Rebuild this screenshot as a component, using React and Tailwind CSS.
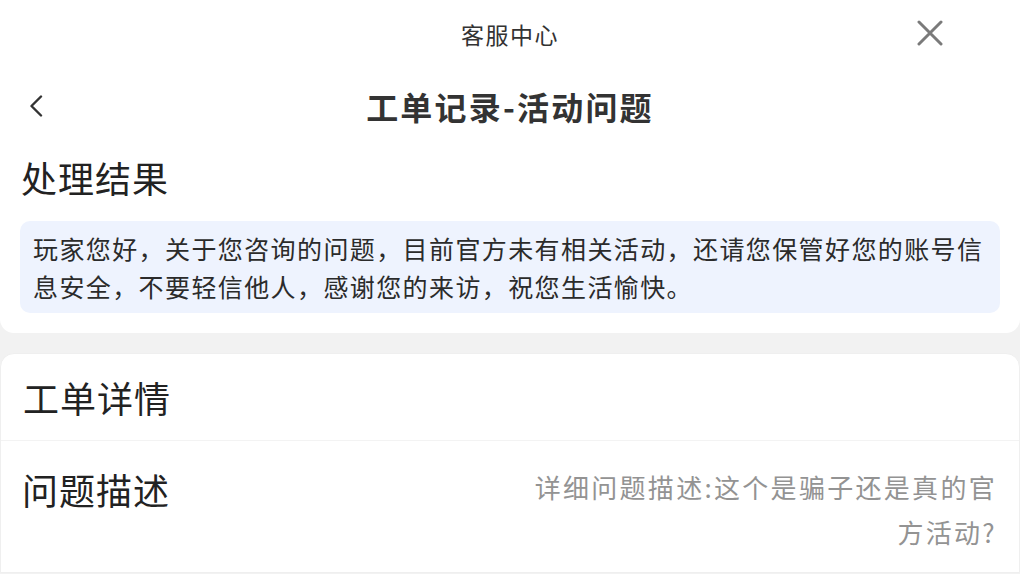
import React from 'react';

const CloseIcon = () => (
    <svg width="26" height="26" viewBox="0 0 26 26" fill="none">
        <path d="M2 2L24 24M24 2L2 24" stroke="#7a7a7a" strokeWidth="3" strokeLinecap="round" />
    </svg>
);

const BackIcon = () => (
    <svg width="16" height="22" viewBox="0 0 16 22" fill="none">
        <path d="M13 1.5L3.5 11L13 20.5" stroke="#333" strokeWidth="2.4" strokeLinecap="round" strokeLinejoin="round" />
    </svg>
);

const App = () => {
    return (
        <div
            className="w-[1020px] h-[574px] overflow-hidden bg-[#f2f2f2] text-[#222]"
            style={{ fontFamily: '"Noto Sans CJK SC", "Noto Sans", sans-serif' }}
        >
            <div className="bg-white rounded-b-[14px] h-[333px] flex flex-col">
                <div className="relative h-[68px] flex items-center justify-center">
                    <span className="text-[23px] tracking-[1.5px] text-[#333]">客服中心</span>
                    <div className="absolute right-[77px] top-[20px]">
                        <CloseIcon />
                    </div>
                </div>

                <div className="relative h-[76px] flex items-center justify-center">
                    <div className="absolute left-[28px] top-[27px]">
                        <BackIcon />
                    </div>
                    <h1 className="text-[32px] font-bold tracking-[2.2px] text-[#333]">工单记录-活动问题</h1>
                </div>

                <h2 className="mt-[11px] px-[21px] text-[36px] leading-[44px] tracking-[1px]">处理结果</h2>

                <div className="mt-[22px] mx-[20px] rounded-[10px] bg-[#eef3fe] pl-[13px] pr-[7px] py-[8px] h-[92px]">
                    <p className="text-[25px] leading-[38px] tracking-[1.4px] text-[#2b2b2b]">
                        玩家您好，关于您咨询的问题，目前官方未有相关活动，还请您保管好您的账号信息安全，不要轻信他人，感谢您的来访，祝您生活愉快。
                    </p>
                </div>
            </div>

            <div className="mt-[20px] bg-white rounded-t-[14px] border border-[#efefef] h-[220px] flex flex-col">
                <div className="h-[86px] flex items-center px-[22px]">
                    <h2 className="text-[36px] tracking-[1px]">工单详情</h2>
                </div>
                <div className="h-px bg-[#f3f3f3]" />
                <div className="flex items-start justify-between pl-[21px] pr-[22px] pt-[23px]">
                    <h3 className="mt-[3px] text-[36px] leading-[45px] tracking-[1px]">问题描述</h3>
                    <p className="w-[474px] text-right text-[26px] leading-[45px] tracking-[2.3px] text-[#939393]">
                        详细问题描述:这个是骗子还是真的官方活动?
                    </p>
                </div>
            </div>
        </div>
    );
};

export default App;
